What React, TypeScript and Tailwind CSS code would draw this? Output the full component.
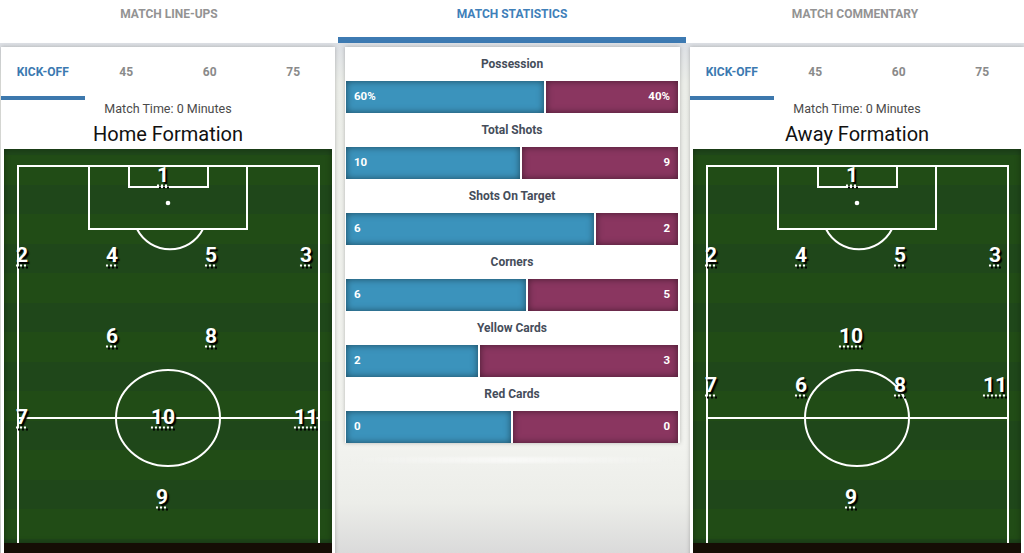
import React from "react";

type Player = { n: number; x: number; y: number };

const homePlayers: Player[] = [
  { n: 1, x: 159, y: 26 },
  { n: 2, x: 18, y: 106 },
  { n: 4, x: 108, y: 106 },
  { n: 5, x: 207, y: 106 },
  { n: 3, x: 302, y: 106 },
  { n: 6, x: 108, y: 187 },
  { n: 8, x: 207, y: 187 },
  { n: 7, x: 18, y: 268 },
  { n: 10, x: 159, y: 268 },
  { n: 11, x: 302, y: 268 },
  { n: 9, x: 158, y: 348 },
];

const awayPlayers: Player[] = [
  { n: 1, x: 159, y: 26 },
  { n: 2, x: 18, y: 106 },
  { n: 4, x: 108, y: 106 },
  { n: 5, x: 207, y: 106 },
  { n: 3, x: 302, y: 106 },
  { n: 10, x: 158, y: 187 },
  { n: 7, x: 18, y: 236 },
  { n: 6, x: 108, y: 236 },
  { n: 8, x: 207, y: 236 },
  { n: 11, x: 302, y: 236 },
  { n: 9, x: 158, y: 348 },
];

const stats = [
  { label: "Possession", home: 60, away: 40, suffix: "%" },
  { label: "Total Shots", home: 10, away: 9, suffix: "" },
  { label: "Shots On Target", home: 6, away: 2, suffix: "" },
  { label: "Corners", home: 6, away: 5, suffix: "" },
  { label: "Yellow Cards", home: 2, away: 3, suffix: "" },
  { label: "Red Cards", home: 0, away: 0, suffix: "" },
];

function Pitch({ players }: { players: Player[] }) {
  return (
    <div className="relative mx-[3px] h-[394px] bg-[repeating-linear-gradient(180deg,#214c16_0px,#214c16_30px,#1f471a_30px,#1f471a_59px)] bg-[position:0_6px] shadow-[inset_0_0_6px_rgba(0,0,0,0.35)]">
      <svg width="328" height="394" viewBox="0 0 328 394" className="absolute inset-0" fill="none" stroke="#fff" strokeWidth="2">
        <path d="M14 394 V17 H315 V394" />
        <rect x="85" y="17" width="158" height="63" />
        <rect x="125" y="17" width="79" height="21" />
        <circle cx="164" cy="54" r="2.3" fill="#fff" stroke="none" />
        <path d="M133 80 A37 37 0 0 0 199 80" />
        <path d="M14 269 H315" />
        <ellipse cx="164" cy="269" rx="52" ry="48" />
      </svg>
      {players.map((p) => (
        <span
          key={p.n}
          className="absolute -translate-x-1/2 -translate-y-1/2 text-[21px] font-bold leading-none text-white underline decoration-dotted decoration-2 underline-offset-[3px] [text-shadow:2px_2px_1px_#000]"
          style={{ left: p.x, top: p.y }}
        >
          {p.n}
        </span>
      ))}
      <div className="absolute left-0 right-0 top-[394px] h-[12px] bg-[#150d05]" />
    </div>
  );
}

function FormationCard({ title, players }: { title: string; players: Player[] }) {
  const tabs = ["KICK-OFF", "45", "60", "75"];
  return (
    <div className="h-[520px] w-[334px] bg-white shadow-[0_0_4px_rgba(0,0,0,0.25)]">
      <div className="flex">
        {tabs.map((t, i) => (
          <div
            key={t}
            className={
              i === 0
                ? "flex h-[53px] flex-1 items-center justify-center border-b-4 border-[#3d78ad] text-[12px] font-bold text-[#3b79b0]"
                : "flex h-[53px] flex-1 items-center justify-center border-b-4 border-transparent text-[12px] font-bold text-[#8a8a8a]"
            }
          >
            {t}
          </div>
        ))}
      </div>
      <div className="flex h-[18px] items-center justify-center text-[12.5px] text-[#4a4a4a]">
        Match Time: 0 Minutes
      </div>
      <div className="flex h-[31px] items-center justify-center text-[20px] text-[#111]">
        {title}
      </div>
      <Pitch players={players} />
    </div>
  );
}

function StatRow({ label, home, away, suffix }: { label: string; home: number; away: number; suffix: string }) {
  const total = home + away;
  const pct = total ? home / total : 0.5;
  return (
    <div>
      <div className="flex h-[34px] items-center justify-center text-[12px] font-bold text-[#454d5a]">
        {label}
      </div>
      <div className="flex h-[32px] gap-[2px]">
        <div
          className="flex items-center bg-[#3b93bc] pl-[8px] text-[11.5px] font-bold text-white shadow-[inset_0_0_7px_rgba(0,0,0,0.5)]"
          style={{ width: `calc(${pct * 100}% - 1px)` }}
        >
          {home}
          {suffix}
        </div>
        <div className="flex flex-1 items-center justify-end bg-[#8a3660] pr-[8px] text-[11.5px] font-bold text-white shadow-[inset_0_0_7px_rgba(0,0,0,0.5)]">
          {away}
          {suffix}
        </div>
      </div>
    </div>
  );
}

export default function App() {
  const nav = ["MATCH LINE-UPS", "MATCH STATISTICS", "MATCH COMMENTARY"];
  return (
    <div className="h-[553px] w-[1024px] overflow-hidden font-['Roboto',sans-serif]">
      <div className="grid grid-cols-[338px_348px_338px] bg-white">
        {nav.map((n, i) => (
          <div
            key={n}
            className={
              i === 1
                ? "flex h-[43px] justify-center border-b-[6px] border-[#3d7ab2] pt-[8px] text-[12px] font-bold leading-[13px] text-[#3f80b9]"
                : "flex h-[43px] justify-center border-b-[6px] border-white pt-[8px] text-[12px] font-bold leading-[13px] text-[#939393]"
            }
          >
            {n}
          </div>
        ))}
      </div>
      <div className="relative flex h-[510px] items-start gap-[10px] bg-[linear-gradient(180deg,#dde0e5_0px,#eceee9_40px,#f2f3ef_400px,#ecede9_460px,#dadada_510px)] pl-px pt-[4px]">
        <FormationCard title="Home Formation" players={homePlayers} />
        <div className="w-[335px]">
          <div className="bg-white pl-px pr-[2px] shadow-[0_0_4px_rgba(0,0,0,0.25)]">
            {stats.map((s) => (
              <StatRow key={s.label} {...s} />
            ))}
          </div>
          <div className="mt-[14px] h-[6px] bg-[linear-gradient(90deg,transparent,rgba(255,255,255,0.55),transparent)] blur-[1px]" />
        </div>
        <FormationCard title="Away Formation" players={awayPlayers} />
      </div>
    </div>
  );
}
